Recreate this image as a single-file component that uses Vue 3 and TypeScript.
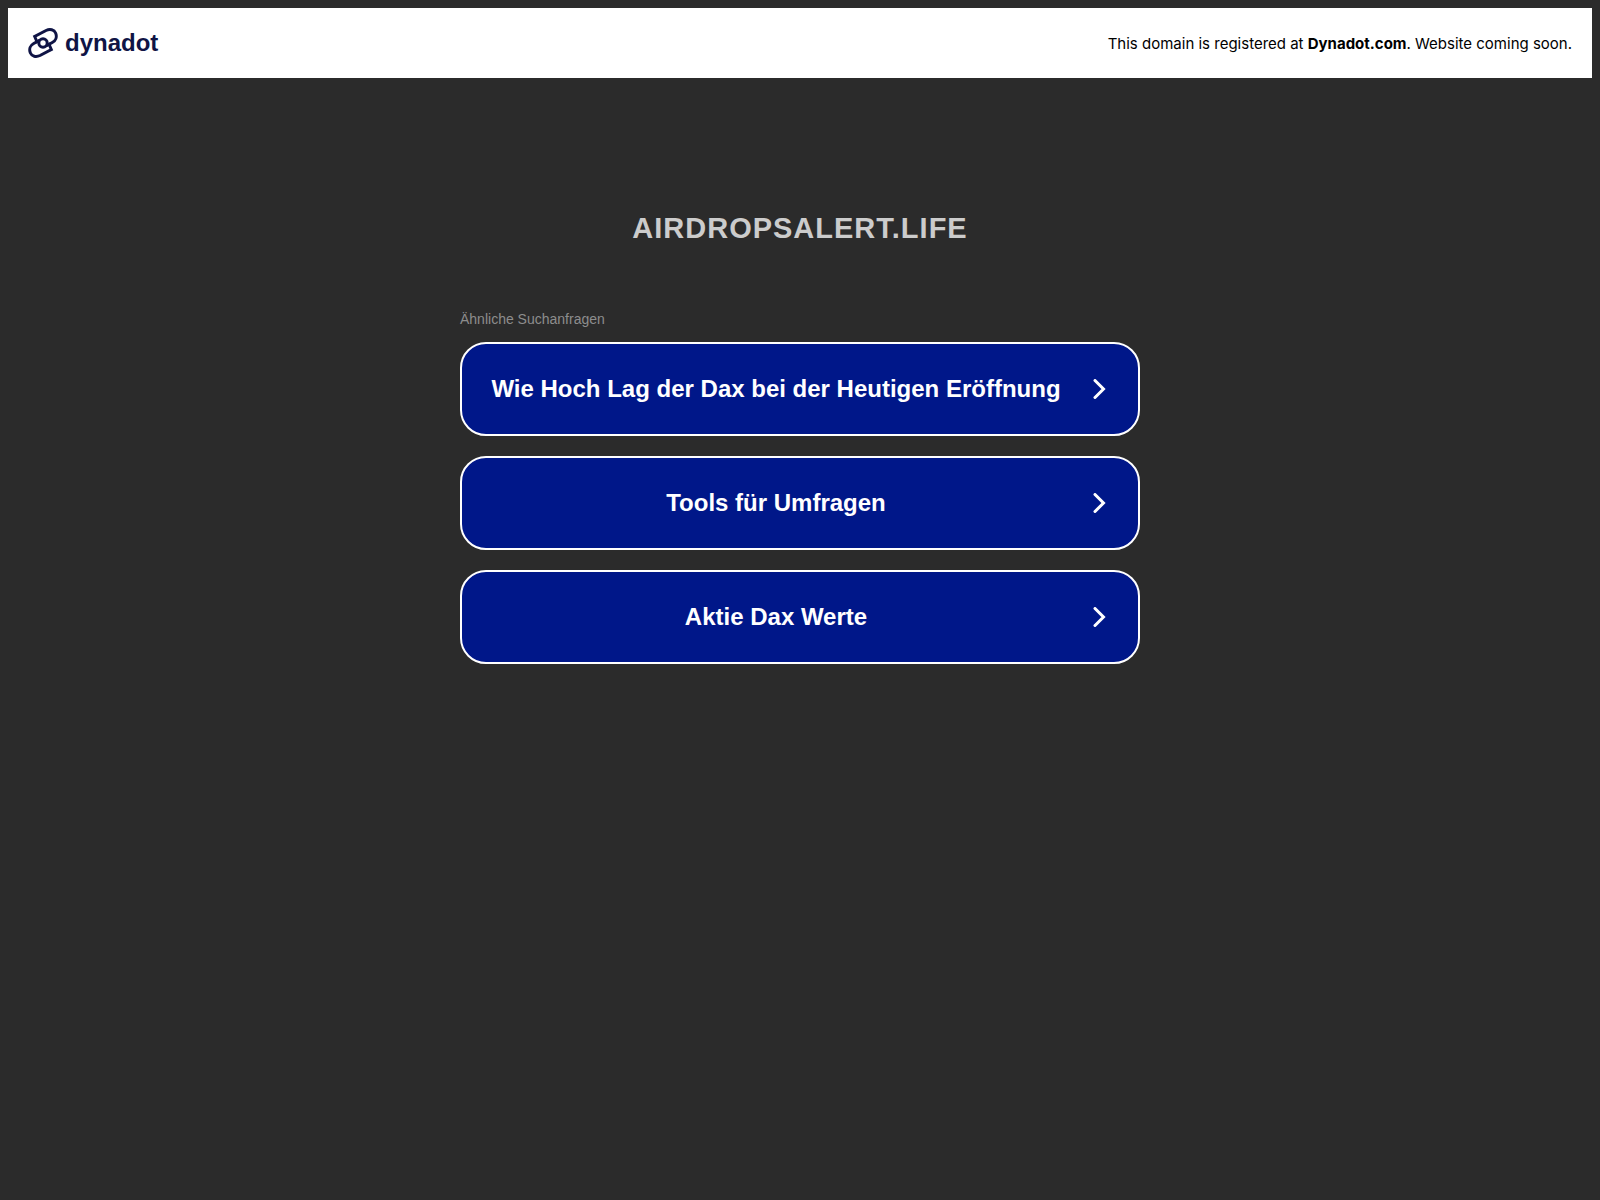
<script setup lang="ts">
const domain = 'AIRDROPSALERT.LIFE'
const searches: string[] = [
  'Wie Hoch Lag der Dax bei der Heutigen Eröffnung',
  'Tools für Umfragen',
  'Aktie Dax Werte',
]
</script>

<template>
  <div class="page">
    <header class="bar">
      <a class="logo" href="#" aria-label="dynadot">
        <svg class="mark" viewBox="0 0 30 30" aria-hidden="true">
          <g fill="none" stroke="#0f1445" stroke-width="3">
            <path d="M9.5 15 L6.7 8.5 L18 2.5 C22 .6 26.2 1.7 27.6 5 C29.2 8.8 27.8 12.6 24.3 14.5 L18.5 17.6" />
            <path d="M20.5 15 L23.3 21.5 L12 27.5 C8 29.4 3.8 28.3 2.4 25 C.8 21.2 2.2 17.4 5.7 15.5 L11.5 12.4" />
            <circle cx="15" cy="15" r="4.2" />
          </g>
        </svg>
        <span>dynadot</span>
      </a>
      <p class="notice">This domain is registered at <a href="#">Dynadot.com</a>. Website coming soon.</p>
    </header>
    <main class="content">
      <h1>{{ domain }}</h1>
      <section class="related">
        <h2>Ähnliche Suchanfragen</h2>
        <ul>
          <li v-for="term in searches" :key="term">
            <a class="search" href="#">
              <span>{{ term }}</span>
              <svg viewBox="0 0 20 20" aria-hidden="true">
                <path d="M5 1.5 L13.5 10 L5 18.5" fill="none" stroke="#fff" stroke-width="3" stroke-linecap="round" />
              </svg>
            </a>
          </li>
        </ul>
      </section>
    </main>
  </div>
</template>

<style>
body {
  margin: 0;
  background: #2b2b2b;
}
</style>

<style scoped>
.page {
  padding: 8px;
  font-family: "Liberation Sans", Arial, sans-serif;
}
.bar {
  display: flex;
  align-items: center;
  justify-content: space-between;
  min-height: 70px;
  padding: 0 20px;
  box-sizing: border-box;
  background: #fff;
}
.logo {
  display: flex;
  align-items: center;
  gap: 7px;
  color: #0f1445;
  font-size: 24px;
  font-weight: 700;
  text-decoration: none;
}
.mark {
  width: 30px;
  height: 30px;
}
.notice {
  margin: 0;
  color: #000;
  font-family: Inter, "Liberation Sans", sans-serif;
  font-size: 15px;
}
.notice a {
  color: inherit;
  font-weight: 700;
  text-decoration: none;
}
.content {
  max-width: 680px;
  margin: 0 auto;
  padding-top: 132px;
}
h1 {
  margin: 0;
  color: #ccc;
  font-size: 29px;
  font-weight: 700;
  line-height: 36px;
  letter-spacing: 1px;
  text-align: center;
}
.related {
  margin-top: 64px;
}
h2 {
  margin: 0 0 14px;
  color: #8d8d8d;
  font-size: 14px;
  font-weight: 400;
  line-height: 18px;
}
ul {
  display: flex;
  flex-direction: column;
  gap: 20px;
  margin: 0;
  padding: 0;
  list-style: none;
}
.search {
  display: flex;
  align-items: center;
  min-height: 94px;
  padding-right: 28px;
  box-sizing: border-box;
  border: 2px solid #fff;
  border-radius: 26px;
  background: #001789;
  color: #fff;
  font-size: 24px;
  font-weight: 700;
  text-align: center;
  text-decoration: none;
}
.search span {
  flex: 1;
}
.search svg {
  width: 20px;
  height: 20px;
}
</style>
